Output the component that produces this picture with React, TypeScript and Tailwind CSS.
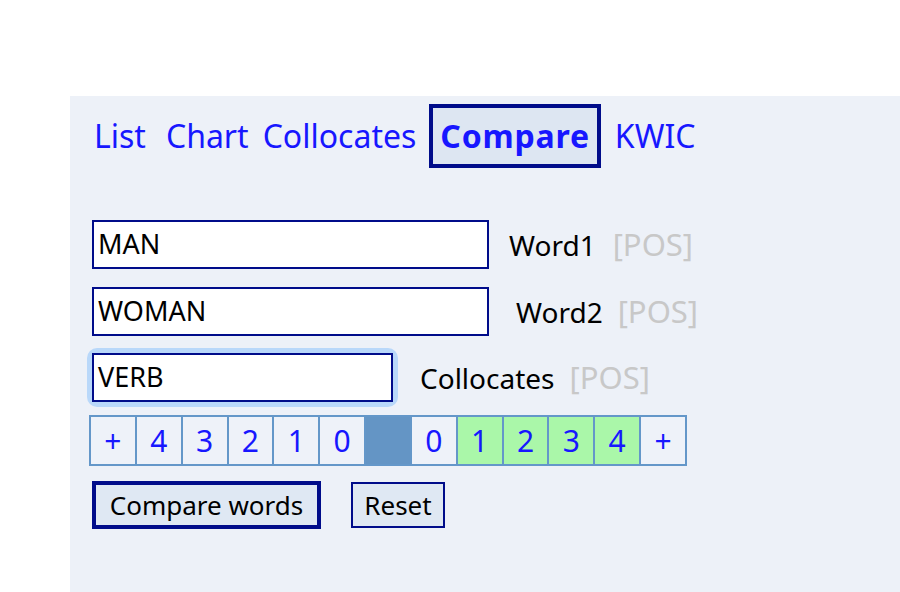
import React from "react";

const font = { fontFamily: '"Noto Sans", "Open Sans", sans-serif' };

function Row({
  value,
  width,
  label,
  labelGap,
  posGap,
  focus,
}: {
  value: string;
  width: string;
  label: string;
  labelGap: string;
  posGap: string;
  focus?: boolean;
}) {
  return (
    <div className="flex items-center">
      <div className={focus ? "rounded-[5px] shadow-[0_0_0_5px_#b9d8fa]" : ""}>
        <div
          className={
            "flex h-[49px] items-center border-2 border-[#000c8a] bg-white pl-[4px] text-[27px] text-black " +
            width
          }
        >
          {value}
        </div>
      </div>
      <span className={"text-[28px] text-black " + labelGap}>{label}</span>
      <span className={"text-[31px] text-[#c8c8c8] " + posGap}>[POS]</span>
    </div>
  );
}

export default function App() {
  const cells: { t: string; kind: "n" | "g" | "b" }[] = [
    { t: "+", kind: "n" },
    { t: "4", kind: "n" },
    { t: "3", kind: "n" },
    { t: "2", kind: "n" },
    { t: "1", kind: "n" },
    { t: "0", kind: "n" },
    { t: "", kind: "b" },
    { t: "0", kind: "n" },
    { t: "1", kind: "g" },
    { t: "2", kind: "g" },
    { t: "3", kind: "g" },
    { t: "4", kind: "g" },
    { t: "+", kind: "n" },
  ];
  return (
    <div className="h-[592px] w-[900px] overflow-hidden bg-white" style={font}>
      <div className="ml-[70px] mt-[96px] h-[496px] w-[830px] bg-[#edf1f8] pt-[8px]">
        <div className="flex h-[64px] items-center pl-[24px] text-[32px] text-[#1717ff]">
          <a>List</a>
          <a className="ml-[20px]">Chart</a>
          <a className="ml-[14px]">Collocates</a>
          <a className="ml-[13px] flex h-[64px] items-center border-4 border-[#000c8a] bg-[#dde6f2] px-[7px] font-bold tracking-[0.8px]">
            Compare
          </a>
          <a className="ml-[14px]">KWIC</a>
        </div>
        <div className="pl-[22px] pt-[52px]">
          <Row value="MAN" width="w-[397px]" label="Word1" labelGap="ml-[20px]" posGap="ml-[17px]" />
          <div className="h-[18px]" />
          <Row value="WOMAN" width="w-[397px]" label="Word2" labelGap="ml-[27px]" posGap="ml-[15px]" />
          <div className="h-[17px]" />
          <Row value="VERB" width="w-[301px]" label="Collocates" labelGap="ml-[27px]" posGap="ml-[15px]" focus />
          <div className="ml-[-3px] mt-[13px] flex w-[598px] border-l-2 border-[#6497c9]">
            {cells.map((c, i) => (
              <div
                key={i}
                className={
                  "flex h-[51px] w-[46px] items-center justify-center border-y-2 border-r-2 border-[#6497c9] text-[30px] text-[#1717ff] " +
                  (c.kind === "g"
                    ? "bg-[#aaf7a9]"
                    : c.kind === "b"
                    ? "bg-[#6495c5]"
                    : "bg-[#eef2f9]")
                }
              >
                {c.t}
              </div>
            ))}
          </div>
          <div className="mt-[15px] flex items-center">
            <button className="h-[48px] w-[229px] border-4 border-[#000c8a] bg-[#dfe8f3] text-[26px] text-black">
              Compare words
            </button>
            <button className="ml-[30px] h-[46px] w-[94px] border-2 border-[#000c8a] bg-[#dfe8f3] text-[26px] text-black">
              Reset
            </button>
          </div>
        </div>
      </div>
    </div>
  );
}
